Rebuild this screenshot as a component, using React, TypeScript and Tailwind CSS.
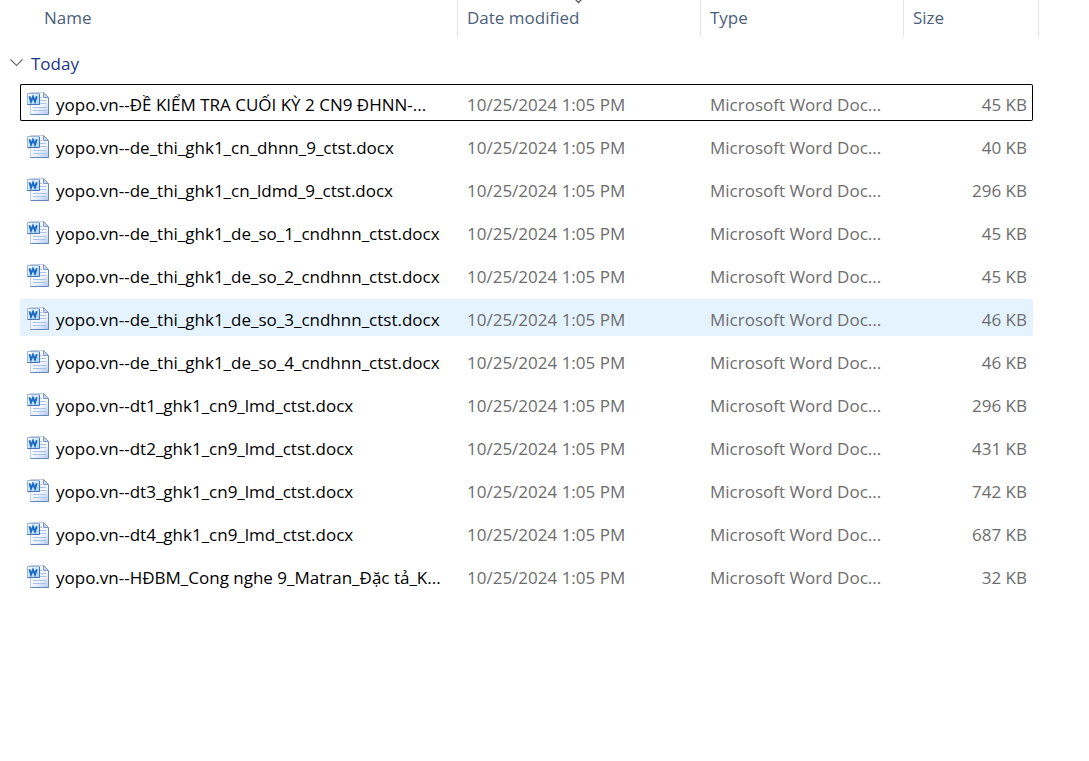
const DATE = "10/25/2024 1:05 PM"
const TYPE = "Microsoft Word Doc..."

const files = [
  { name: "yopo.vn--ĐỀ KIỂM TRA CUỐI KỲ 2 CN9 ĐHNN-...", size: "45 KB", focused: true },
  { name: "yopo.vn--de_thi_ghk1_cn_dhnn_9_ctst.docx", size: "40 KB" },
  { name: "yopo.vn--de_thi_ghk1_cn_ldmd_9_ctst.docx", size: "296 KB" },
  { name: "yopo.vn--de_thi_ghk1_de_so_1_cndhnn_ctst.docx", size: "45 KB" },
  { name: "yopo.vn--de_thi_ghk1_de_so_2_cndhnn_ctst.docx", size: "45 KB" },
  { name: "yopo.vn--de_thi_ghk1_de_so_3_cndhnn_ctst.docx", size: "46 KB", hovered: true },
  { name: "yopo.vn--de_thi_ghk1_de_so_4_cndhnn_ctst.docx", size: "46 KB" },
  { name: "yopo.vn--dt1_ghk1_cn9_lmd_ctst.docx", size: "296 KB" },
  { name: "yopo.vn--dt2_ghk1_cn9_lmd_ctst.docx", size: "431 KB" },
  { name: "yopo.vn--dt3_ghk1_cn9_lmd_ctst.docx", size: "742 KB" },
  { name: "yopo.vn--dt4_ghk1_cn9_lmd_ctst.docx", size: "687 KB" },
  { name: "yopo.vn--HĐBM_Cong nghe 9_Matran_Đặc tả_K...", size: "32 KB" },
]

function WordIcon() {
  return (
    <svg width="24" height="24" viewBox="0 0 24 24" fill="none" className="mb-[2px] shrink-0" aria-hidden="true">
      <defs>
        <linearGradient id="page" x1="4" y1="1" x2="23" y2="23" gradientUnits="userSpaceOnUse">
          <stop stopColor="#ffffff" />
          <stop offset="0.6" stopColor="#f0f5fd" />
          <stop offset="1" stopColor="#a9c5ee" />
        </linearGradient>
        <linearGradient id="badge" x1="1" y1="2" x2="12" y2="13" gradientUnits="userSpaceOnUse">
          <stop stopColor="#ffffff" />
          <stop offset="1" stopColor="#9fd3fb" />
        </linearGradient>
      </defs>
      {/* Page with folded corner */}
      <path d="M4.5 0.5h13l5 5v17h-18z" fill="url(#page)" stroke="#c3cfe0" />
      <path d="M22.5 5.5v17h-18" stroke="#6686bd" />
      <path d="M17.5 0.5v5h5z" fill="#c9daf0" stroke="#7f9ac2" />
      <path d="M14 5.5h2M14 8.5h6M14 11.5h6M7 15.5h13M7 18.5h13" stroke="#a9c3e8" />
      {/* W badge */}
      <path d="M1.5 1.5h12v11h-12z" fill="url(#badge)" stroke="#9ab3d6" />
      <path d="M13.5 2v10.5H1.5" stroke="#4d73b4" />
      <path d="M3.4 4.2L5 9.6L7 4.8l2 4.8l1.8-5.4" stroke="#1a69c4" strokeWidth="1.9" />
    </svg>
  )
}

export default function App() {
  return (
    <main className="min-h-screen bg-white pr-[50px] font-['Open_Sans','Noto_Sans',sans-serif] text-[17px] leading-6 text-[#6d6d6d]">
      <table className="-mt-[6px] w-full table-fixed border-separate border-spacing-x-0 border-spacing-y-[6px] whitespace-nowrap">
        <colgroup>
          <col className="w-5" />
          <col />
          <col className="w-[243px]" />
          <col className="w-[203px]" />
          <col className="w-[129px]" />
          <col className="w-[6px]" />
        </colgroup>
        <thead>
          <tr className="h-[37px] text-left text-[#4c607a]">
            <th colSpan={2} className="border-r border-[#e5e5e5] p-0 pb-[2px] pl-11 font-normal">
              <button type="button">Name</button>
            </th>
            <th className="relative border-r border-[#e5e5e5] p-0 pb-[2px] pl-[9px] font-normal" aria-sort="descending">
              <svg width="9" height="4" viewBox="0 0 9 4" className="absolute inset-x-0 top-0 mx-auto" aria-hidden="true">
                <path d="M1 -1l3.5 3.5L8 -1" fill="none" stroke="#5c5c5c" strokeWidth="1.3" />
              </svg>
              <button type="button">Date modified</button>
            </th>
            <th className="border-r border-[#e5e5e5] p-0 pb-[2px] pl-[9px] font-normal">
              <button type="button">Type</button>
            </th>
            <th colSpan={2} className="border-r border-[#e5e5e5] p-0 pb-[2px] pl-[9px] font-normal">
              <button type="button">Size</button>
            </th>
          </tr>
        </thead>
        <tbody>
          <tr className="h-[35px]">
            <th colSpan={6} className="p-0 pt-[6px] pl-[9px] text-left font-normal">
              <button type="button" aria-expanded="true" className="flex items-center gap-[7px] text-[#1e3287]">
                <svg width="15" height="9" viewBox="0 0 15 9" className="mb-[2px]" aria-hidden="true">
                  <path d="M1.5 1.5l6 6l6-6" fill="none" stroke="#6d6d6d" strokeWidth="1.2" />
                </svg>
                Today
              </button>
            </th>
          </tr>
          {files.map((file) => (
            <tr key={file.name} className="h-[37px]">
              <td className="p-0" />
              <td
                className={`rounded-l-xs border-y border-l p-0 pt-1 pl-[5px] ${file.focused ? "border-black" : "border-transparent"} ${file.hovered ? "bg-[#e5f3ff]" : ""}`}
              >
                <div className="flex items-center gap-[6px] text-black">
                  <WordIcon />
                  <span>{file.name}</span>
                </div>
              </td>
              <td
                className={`border-y p-0 pt-1 pl-[9px] ${file.focused ? "border-black" : "border-transparent"} ${file.hovered ? "bg-[#e5f3ff]" : ""}`}
              >
                {DATE}
              </td>
              <td
                className={`border-y p-0 pt-1 pl-[9px] ${file.focused ? "border-black" : "border-transparent"} ${file.hovered ? "bg-[#e5f3ff]" : ""}`}
              >
                {TYPE}
              </td>
              <td
                className={`rounded-r-xs border-y border-r p-0 pt-1 pr-[5px] text-right ${file.focused ? "border-black" : "border-transparent"} ${file.hovered ? "bg-[#e5f3ff]" : ""}`}
              >
                {file.size}
              </td>
            </tr>
          ))}
        </tbody>
      </table>
    </main>
  )
}
